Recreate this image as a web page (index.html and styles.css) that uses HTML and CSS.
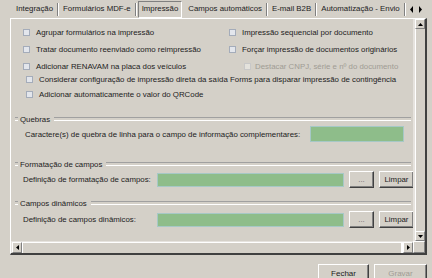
FILE: index.html
```html
<!DOCTYPE html>
<html lang="pt-BR">
<head>
<meta charset="utf-8">
<link rel="stylesheet" href="styles.css">
</head>
<body>
<div class="win">
  <div class="tabs">
    <span class="tab">Integração</span><span class="sep"></span>
    <span class="tab">Formulários MDF-e</span><span class="sep"></span>
    <span class="tab active">Impressão</span>
    <span class="tab">Campos automáticos</span><span class="sep"></span>
    <span class="tab">E-mail B2B</span><span class="sep"></span>
    <span class="tab">Automatização - Envio</span><span class="sep"></span>
    <span class="tabarrows">
      <svg width="5" height="7" viewBox="0 0 5 7"><path d="M4 0 L1 3.5 L4 7 Z" fill="#000"/></svg>
      <svg width="5" height="7" viewBox="0 0 5 7"><path d="M1 0 L4 3.5 L1 7 Z" fill="#000"/></svg>
    </span>
  </div>
  <div class="panel">
    <div class="content">
      <div class="opts">
        <label class="opt"><span class="cb"></span>Agrupar formulários na impressão</label>
        <label class="opt"><span class="cb"></span>Impressão sequencial por documento</label>
        <label class="opt"><span class="cb"></span>Tratar documento reenviado como reimpressão</label>
        <label class="opt"><span class="cb"></span>Forçar impressão de documentos originários</label>
        <label class="opt"><span class="cb"></span>Adicionar RENAVAM na placa dos veículos</label>
        <label class="opt sub disabled"><span class="cb"></span>Destacar CNPJ, série e nº do documento</label>
      </div>
      <div class="opts-wide">
        <label class="opt"><span class="cb"></span>Considerar configuração de impressão direta da saída Forms para disparar impressão de contingência</label>
        <label class="opt"><span class="cb"></span>Adicionar automaticamente o valor do QRCode</label>
      </div>

      <div class="group g-quebras">
        <div class="legend"><span>Quebras</span></div>
        <div class="row-q">
          <span class="lbl">Caractere(s) de quebra de linha para o campo de informação complementares:</span>
          <span class="field"></span>
        </div>
      </div>

      <div class="group g-format">
        <div class="legend"><span>Formatação de campos</span></div>
        <div class="row-f">
          <span class="lbl">Definição de formatação de campos:</span>
          <span class="field"></span>
          <span class="btn dots">...</span>
          <span class="btn">Limpar</span>
        </div>
      </div>

      <div class="group g-din">
        <div class="legend"><span>Campos dinâmicos</span></div>
        <div class="row-f">
          <span class="lbl">Definição de campos dinâmicos:</span>
          <span class="field"></span>
          <span class="btn dots">...</span>
          <span class="btn">Limpar</span>
        </div>
      </div>
    </div>
    <div class="vscroll">
      <span class="sbtn"><svg width="5" height="3" viewBox="0 0 5 3"><path d="M0 3 L2.5 0 L5 3 Z" fill="#000"/></svg></span>
      <span class="vtrack"></span>
      <span class="sbtn"><svg width="5" height="3" viewBox="0 0 5 3"><path d="M0 0 L2.5 3 L5 0 Z" fill="#000"/></svg></span>
    </div>
    <div class="hscroll">
      <span class="sbtn"><svg width="3" height="5" viewBox="0 0 3 5"><path d="M3 0 L0 2.5 L3 5 Z" fill="#000"/></svg></span>
      <span class="htrack"></span>
      <span class="sbtn"><svg width="3" height="5" viewBox="0 0 3 5"><path d="M0 0 L3 2.5 L0 5 Z" fill="#000"/></svg></span>
    </div>
    <div class="corner"></div>
  </div>
  <div class="footer">
    <span class="btn big">Fechar</span>
    <span class="btn big disabled">Gravar</span>
  </div>
</div>
</body>
</html>
```

FILE: styles.css
```css
* { box-sizing: border-box; }
html, body { margin: 0; padding: 0; }
body {
  width: 432px;
  height: 278px;
  overflow: hidden;
  background: #d4d0c8;
  font-family: "Liberation Sans", Arial, sans-serif;
  font-size: 7.85px;
  color: #1c1c1c;
}
.win {
  width: 432px;
  height: 278px;
  display: flex;
  flex-direction: column;
}

/* tabs */
.tabs {
  height: 18px;
  display: flex;
  align-items: center;
  padding-left: 12px;
  white-space: nowrap;
}
.tab {
  padding: 0 4px;
  line-height: 12px;
}
.tab.active {
  height: 17px;
  margin-top: 1px;
  line-height: 14px;
  padding: 0 3px;
  margin-left: 1px;
  margin-right: 2px;
  border-top: 1px solid #808080;
  border-left: 1px solid #808080;
  border-right: 1px solid #fff;
  border-bottom: 1px solid #fff;
}
.sep {
  width: 2px;
  height: 13px;
  border-left: 1px solid #808080;
  border-right: 1px solid #fff;
}
.tabarrows {
  display: flex;
  gap: 4px;
  margin-left: 3px;
}
.tabarrows svg { display: block; }

/* panel */
.panel {
  margin-left: 10px;
  width: 417px;
  height: 237px;
  border-top: 1px solid #fff;
  border-left: 1px solid #fff;
  border-right: 2px solid #404040;
  border-bottom: 2px solid #404040;
  display: grid;
  grid-template-columns: 402px 12px;
  grid-template-rows: 222px 12px;
}
.content {
  overflow: hidden;
  position: relative;
}

/* checkbox options */
.opts {
  padding-top: 5px;
  display: grid;
  grid-template-columns: 218px 1fr;
  grid-auto-rows: 17px;
}
.opt {
  display: flex;
  align-items: center;
  gap: 6px;
  white-space: nowrap;
}
.opts .opt:nth-child(odd) { padding-left: 12px; }
.opts .opt.sub { padding-left: 15px; gap: 4px; }
.opt.disabled { color: #a09c94; }
.cb {
  width: 7px;
  height: 7px;
  flex: none;
  border: 1px solid #a4acba;
  background: #e3e6ec;
}
.opt.disabled .cb { border-color: #c8c8c8; background: #e4e2dc; }
.opts-wide {
  margin-top: -3px;
  display: grid;
  grid-auto-rows: 15px;
  padding-left: 15px;
}

/* groups */
.group {
  margin: 0 2px 0 4px;
}
.legend {
  height: 12px;
  display: flex;
  align-items: center;
}
.legend::before {
  content: "";
  width: 3px;
  height: 2px;
  border-top: 1px solid #a0a0a0;
  border-bottom: 1px solid #fff;
  margin-right: 2px;
}
.legend::after {
  content: "";
  flex: 1;
  height: 2px;
  border-top: 1px solid #a0a0a0;
  border-bottom: 1px solid #fff;
  margin-left: 4px;
}
.g-quebras { margin-top: 11px; }
.g-format { margin-top: 16px; }
.g-din { margin-top: 9px; }

.row-q {
  margin-top: 1px;
  height: 16px;
  display: flex;
  align-items: center;
  justify-content: space-between;
  padding-left: 10px;
  padding-right: 7px;
}
.row-q .field { width: 94px; height: 16px; }
.row-f {
  margin-top: 1px;
  height: 17px;
  display: grid;
  grid-template-columns: 129px 187px 25px 35px;
  column-gap: 5px;
  align-items: center;
  padding-left: 8px;
}
.g-din .row-f { margin-top: 2px; }
.row-f .field { height: 14px; }
.lbl { white-space: nowrap; }
.field {
  display: block;
  background: #8ebd8a;
  border: 1px solid #a6c8c6;
}
.btn {
  height: 17px;
  display: flex;
  align-items: center;
  justify-content: center;
  border-top: 1px solid #fff;
  border-left: 1px solid #fff;
  border-right: 1px solid #404040;
  border-bottom: 1px solid #404040;
  box-shadow: inset -1px -1px 0 #808080;
  color: #1c1c1c;
}
.btn.dots { color: #6a6a6a; }

/* scrollbars */
.vscroll {
  display: flex;
  flex-direction: column;
  padding-left: 2px;
  background: #e6e3de;
}
.vtrack {
  flex: 1;
  background: #d4d0c8;
  border-left: 1px solid #fff;
}
.sbtn {
  display: flex;
  align-items: center;
  justify-content: center;
  background: #d4d0c8;
  border-top: 1px solid #fff;
  border-left: 1px solid #fff;
  border-right: 1px solid #808080;
  border-bottom: 1px solid #808080;
}
.sbtn svg { display: block; }
.vscroll .sbtn { height: 10px; }
.hscroll {
  display: flex;
  padding-top: 1px;
  background: #e6e3de;
}
.hscroll .sbtn { width: 10px; }
.hscroll .sbtn:first-child { margin-left: 1px; }
.htrack {
  flex: 1;
  background: #d4d0c8;
  border-top: 1px solid #fff;
  border-left: 1px solid #fff;
  border-right: 2px solid #fff;
}
.corner {
  background: #d4d0c8;
  border-top: 1px solid #fff;
  border-left: 1px solid #fff;
  border-right: 1px solid #808080;
  border-bottom: 1px solid #808080;
}

/* footer */
.footer {
  margin-top: 9px;
  display: flex;
  justify-content: flex-end;
  gap: 5px;
  padding-right: 5px;
}
.btn.big { width: 51px; height: 18px; font-size: 8px; }
.btn.big.disabled { width: 53px; color: #a09c94; }
```
